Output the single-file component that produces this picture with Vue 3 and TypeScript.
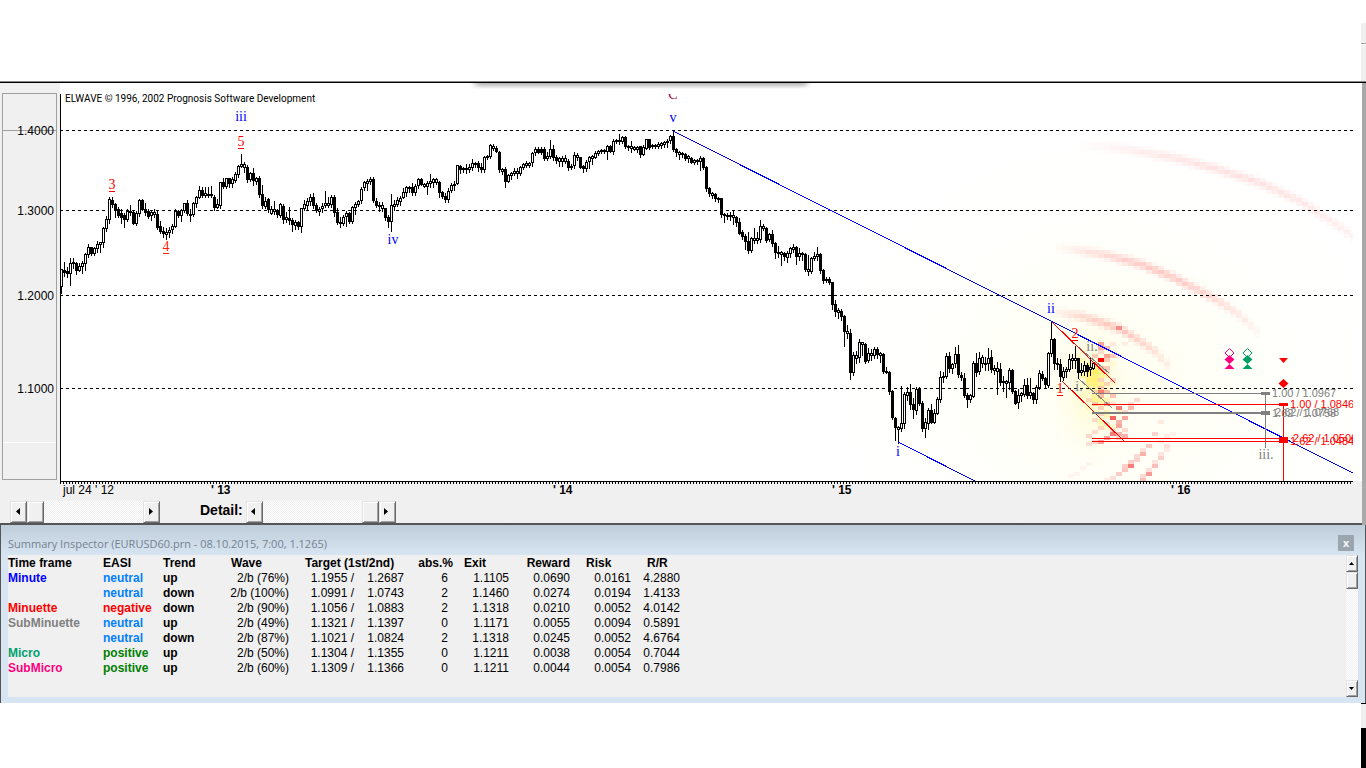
<script setup lang="ts">
type Candle = { x: number; high: number; top: number; bottom: number; low: number; filled: boolean }
type Cell = { x: number; y: number; color: string; opacity: number }
type Point = [number, number]

const AXIS_LEFT = 61
const STEP = 3

// high, body top, body bottom, low; a trailing f marks a falling bar
const bars = `
269 269 286 293,262 270 272 276f,267 271 273 277f,258 263 273 285,258 262 263 268f,262 263 270 274f,263 266 270 271,261 263 266 273,253 254 263 270,244 247 254 257,247 247 253 255f,247 248 253 255,241 244 248 252,242 242 244 252,227 228 242 247,216 219 228 231,197 199 219 223,197 200 204 207f,203 204 209 217f,207 209 215 217f,
209 213 217 223f,213 215 219 227f,209 211 219 221,205 211 212 215,211 212 223 224f,211 213 223 225,199 200 213 216,199 200 209 210f,203 209 212 215f,209 211 216 218f,210 212 215 220,209 212 214 217,210 214 227 229f,221 226 231 233f,227 231 233 237f,228 232 234 239,227 230 232 237,224 226 229 233,209 211 226 227,210 211 215 217f,
209 210 215 221,203 203 210 212,200 203 213 215f,209 214 215 221,202 203 214 216,196 197 203 207,186 190 197 198,187 190 195 197f,187 193 195 197,187 194 195 197,186 194 195 197,195 197 207 210f,199 204 207 208,182 182 205 208,178 182 186 188f,178 178 186 188,178 178 183 187f,177 179 183 187,172 174 180 182,165 166 174 177,
154 164 166 167,162 164 167 172,165 167 179 182f,172 173 179 181,168 173 180 185f,177 178 181 184,176 178 194 197f,185 194 205 208f,197 201 206 208,198 199 209 212f,206 209 213 214,201 209 211 214,209 211 214 217f,203 204 215 217,204 206 219 223f,212 217 219 222,207 218 220 224f,218 220 224 231f,220 222 225 229,221 222 226 229f,
208 208 226 232,200 204 208 210,198 201 205 210,194 197 201 205,193 197 205 208f,203 205 210 212f,207 209 211 215,203 206 208 212,191 203 205 207,197 203 205 207,195 197 204 207,195 197 212 216f,208 212 222 224f,217 222 223 227,215 217 223 225,211 213 216 226,212 213 221 223f,206 207 221 223,202 204 207 214,200 201 204 206,
187 189 200 203,181 182 187 190,179 181 183 190,177 179 181 184,177 179 200 202f,198 201 205 207f,202 205 206 211,202 205 208 211,208 208 217 220f,215 217 221 227f,194 205 221 231,200 204 206 210,197 200 204 206,196 198 201 205,188 192 197 198,186 187 192 196,186 187 188 192,183 187 192 195f,184 186 192 195,178 179 185 188,
178 179 184 185f,183 184 186 187,181 183 186 194,174 181 183 187,178 179 182 187,178 179 182 184,181 182 192 197f,191 192 196 198f,193 196 199 202f,188 191 199 202,183 185 190 192,181 184 185 190,165 165 183 184,165 166 169 173f,167 168 169 172,164 168 169 173,164 167 169 172,159 163 167 170,162 163 164 167,161 163 167 171f,
163 167 169 172f,156 157 169 172,155 156 157 159,144 145 156 158,144 146 148 150,146 148 151 152f,151 152 169 172f,168 169 171 174,167 169 181 187f,174 175 181 182,172 173 175 179,168 171 173 175,168 171 173 178,166 167 173 175,163 164 167 169,161 163 165 167,162 163 165 167,152 153 162 166,147 149 152 155,147 149 152 153f,
147 149 152 154f,147 149 158 160f,152 156 158 160,140 149 156 158,145 149 157 160f,155 157 160 163f,157 158 161 166,156 158 161 166,155 158 161 163,159 161 167 170f,164 166 167 169,152 155 165 168,153 155 157 160,157 157 167 168f,165 166 168 172f,160 162 168 171,156 157 161 168,155 156 158 164,151 153 157 158,150 151 153 155,
149 150 151 153,149 150 151 153,145 146 151 159,145 146 151 152f,139 141 151 154,139 140 141 143,134 140 141 144,136 137 141 143,136 137 146 148f,145 146 147 150,141 146 148 152,146 147 149 150,146 147 149 152,146 146 154 157f,145 147 154 155,139 139 148 149,139 139 147 149f,144 145 146 148,144 145 146 148,142 144 146 148,
142 143 145 148,141 142 144 147,139 141 142 147,135 136 140 143,132 136 149 151f,148 149 152 156f,151 152 154 159,152 153 154 157,153 154 158 160f,155 156 158 162,157 158 162 163f,159 160 162 164,159 160 161 164,156 158 161 170,157 158 167 169f,166 167 188 191f,187 188 193 196f,192 193 195 198,193 194 198 201f,197 198 199 202,
198 198 214 217f,213 214 215 222,213 215 216 219,212 215 216 220,210 215 217 224,216 217 222 226f,218 222 233 234f,230 232 236 239f,234 236 241 249f,232 241 250 253f,237 238 250 252,228 238 240 243,232 238 240 243,220 226 239 242,224 226 228 230,227 228 240 242f,233 234 239 241,230 234 243 246f,242 243 252 258f,246 252 253 257,
251 252 254 265,252 253 256 260f,251 253 257 262,247 248 253 257,244 247 249 252,246 247 256 264f,248 253 256 260,252 253 254 260,253 254 269 271f,255 269 271 275,257 258 271 273,252 256 258 260,247 254 256 260,253 254 270 273f,269 270 280 283f,277 279 280 282,277 279 282 284f,282 282 304 309f,300 304 311 316f,308 310 312 318,
309 311 316 320f,315 316 331 346f,325 331 333 338,329 333 372 379f,352 355 372 375,351 355 358 363,339 342 357 362,342 342 344 355,343 344 361 363f,348 353 360 362,349 353 355 360,347 349 355 358,347 349 354 358f,352 353 355 362,353 354 371 373f,367 371 372 373,371 372 391 394f,390 391 417 419f,417 418 427 440f,426 427 429 443,
386 423 428 431,392 394 423 428,387 392 395 400,384 392 404 409f,398 404 409 418f,387 389 410 414,387 389 403 405f,401 403 428 431f,418 422 428 437,408 410 423 429,404 410 422 423f,409 413 422 423,397 399 413 414,371 377 399 402,372 376 377 382,353 356 376 378,352 356 368 372f,363 364 368 373,347 354 363 367,345 354 374 377f,
372 375 377 380f,373 378 395 397f,393 395 399 407f,394 395 399 402,361 363 396 397,353 363 372 376f,352 358 371 374,355 357 363 367,357 363 364 370,348 358 363 370,350 357 369 372f,365 368 370 374,362 368 371 394,363 369 382 385f,376 381 382 391,380 381 383 397,368 370 382 389,369 370 391 393f,390 391 403 404f,389 395 402 408,
392 393 395 401,379 385 394 396,378 385 395 398f,378 392 395 398,392 393 399 403f,385 387 399 403,370 373 387 389,371 374 378 380f,377 378 384 388f,352 353 385 387,322 339 353 356,338 339 363 369f,358 363 364 369,359 364 376 381f,367 371 377 380,367 369 371 377,354 359 369 371,354 358 360 368,346 358 360 368,358 358 372 378f,
363 370 372 375,361 365 371 375,363 365 371 376f,357 367 369 375,362 363 368 369`

const candles: Candle[] = bars.split(',').map((bar, i) => {
  const filled = bar.trim().endsWith('f')
  const [high, top, bottom, low] = bar.replace('f', '').trim().split(/\s+/).map(Number)
  return { x: AXIS_LEFT + i * STEP, high, top, bottom, low, filled }
})
const wicks = candles.map((c) => `M${c.x} ${c.high}h1V${c.low + 1}h-1z`).join('')
const solid = candles.filter((c) => c.filled).map((c) => `M${c.x - 1} ${c.top}h3V${c.bottom + 1}h-3z`).join('')
const hollow = candles.filter((c) => !c.filled).map((c) => `M${c.x - 1} ${c.top}h3V${c.bottom + 1}h-3z`).join('')
const hollowInner = candles
  .filter((c) => !c.filled && c.bottom - c.top > 1)
  .map((c) => `M${c.x} ${c.top + 1}h1V${c.bottom}h-1z`)
  .join('')

// Probability arcs are drawn on a 6 x 4 grid of cells
function arc(points: Point[], strength: number, spread: number): Cell[] {
  const cells: Cell[] = []
  const first = points[0][0]
  const last = points[points.length - 1][0]
  for (let x = Math.ceil(first / 6) * 6; x < last; x += 6) {
    const k = points.findIndex((p) => p[0] > x)
    const [ax, ay] = points[k - 1]
    const [bx, by] = points[k]
    const centre = ay + ((by - ay) * (x + 3 - ax)) / (bx - ax)
    const fade = Math.sin((Math.PI * (x - first + 8)) / (last - first + 18))
    for (let y = Math.floor(centre / 4) * 4 - 10; y < centre + 12; y += 4) {
      const near = 1 - Math.abs(y + 2 - centre) / spread
      if (near > 0) cells.push({ x, y, color: '#ff0000', opacity: near * fade * strength })
    }
  }
  return cells
}

const spots: [string, [number, number, number][]][] = [
  ['#f00000', [
    [1098, 342, 0.35], [1098, 346, 0.3], [1104, 346, 0.25], [1098, 350, 0.12], [1104, 354, 0.35], [1110, 354, 0.2], [1092, 354, 0.18],
    [1104, 358, 0.2], [1092, 362, 0.2], [1104, 366, 0.2], [1098, 366, 0.25], [1104, 370, 0.12], [1110, 378, 0.15], [1110, 342, 0.08],
    [1122, 342, 0.06], [1116, 354, 0.06], [1098, 378, 0.15], [1104, 382, 0.15], [1098, 386, 0.2], [1098, 390, 0.5], [1104, 390, 0.25], [1092, 390, 0.15],
    [1098, 394, 0.25], [1110, 394, 0.22], [1086, 398, 0.12], [1104, 402, 0.3], [1092, 402, 0.2], [1110, 402, 0.1], [1134, 398, 0.15], [1128, 402, 0.12],
    [1098, 406, 0.15], [1116, 406, 0.5], [1128, 406, 0.25], [1122, 410, 0.15], [1098, 412, 0.15], [1110, 416, 0.6], [1122, 416, 0.35], [1092, 418, 0.12],
    [1116, 420, 0.3], [1104, 422, 0.12], [1116, 424, 0.35], [1098, 426, 0.15], [1110, 428, 0.15], [1110, 432, 0.5], [1122, 428, 0.15], [1092, 430, 0.12],
    [1116, 432, 0.3], [1086, 434, 0.15], [1104, 436, 0.35], [1116, 436, 0.15], [1098, 440, 0.35], [1092, 440, 0.15], [1122, 434, 0.3], [1086, 442, 0.12],
    [1158, 420, 0.08], [1152, 432, 0.17], [1164, 434, 0.07], [1170, 432, 0.05], [1158, 440, 0.05], [1146, 444, 0.2], [1164, 444, 0.12], [1140, 448, 0.12],
    [1140, 452, 0.3], [1134, 454, 0.15], [1134, 458, 0.18], [1128, 460, 0.18], [1128, 464, 0.5], [1122, 464, 0.18], [1122, 468, 0.22],
    [1116, 472, 0.2], [1110, 476, 0.12], [1104, 478, 0.08], [1164, 448, 0.08], [1158, 452, 0.1], [1158, 456, 0.18], [1152, 460, 0.1], [1152, 464, 0.25],
    [1146, 468, 0.12], [1146, 472, 0.4], [1140, 474, 0.15], [1140, 478, 0.25], [1086, 462, 0.04], [1080, 466, 0.04], [1074, 472, 0.04], [1068, 474, 0.04],
  ]],
  ['#ffe000', [
    [1086, 362, 0.3], [1092, 366, 0.45], [1086, 366, 0.4], [1086, 370, 0.5], [1092, 370, 0.5], [1080, 374, 0.25], [1086, 374, 0.35], [1092, 374, 0.4],
    [1098, 374, 0.3], [1092, 378, 0.4], [1098, 370, 0.35], [1086, 378, 0.4], [1092, 382, 0.35], [1086, 382, 0.3], [1086, 386, 0.2], [1092, 386, 0.25],
    [1098, 382, 0.3], [1104, 386, 0.15], [1092, 394, 0.25], [1092, 398, 0.3], [1098, 398, 0.25], [1104, 398, 0.2], [1098, 402, 0.2], [1104, 410, 0.2],
    [1092, 410, 0.15], [1098, 418, 0.2], [1104, 414, 0.2], [1098, 422, 0.2], [1104, 426, 0.15], [1074, 354, 0.15], [1080, 350, 0.15], [1080, 358, 0.2],
    [1110, 362, 0.12], [1110, 350, 0.12], [1104, 374, 0.2], [1110, 382, 0.12], [1080, 394, 0.08], [1086, 406, 0.12], [1116, 410, 0.15], [1110, 424, 0.12],
  ]],
]

const cells: Cell[] = [
  ...arc([[1076, 144], [1100, 146], [1130, 150], [1175, 158], [1220, 170], [1260, 183], [1300, 201], [1330, 220], [1354, 237], [1390, 262]], 0.12, 7),
  ...arc([[1056, 248], [1075, 250], [1105, 255], [1140, 264], [1170, 276], [1198, 290], [1217, 300], [1237, 313], [1258, 332]], 0.22, 7),
  ...arc([[1053, 312], [1080, 316], [1100, 322], [1120, 329], [1137, 339], [1153, 350], [1168, 365]], 0.22, 7),
  { x: 1116, y: 326, color: '#f00000', opacity: 0.3 },
  ...spots.flatMap(([color, list]) => list.map(([x, y, opacity]) => ({ x, y, color, opacity }))),
]

const ticks = Array.from({ length: 431 }, (_, i) => `M${60 + i * 3} 481h1v3h-1z`).join('')
const levels = [
  { y: 130, text: '1.4000' },
  { y: 210, text: '1.3000' },
  { y: 295, text: '1.2000' },
  { y: 388, text: '1.1000' },
]
const years = [
  { x: 211, text: "' 13" },
  { x: 553, text: "' 14" },
  { x: 832, text: "' 15" },
  { x: 1171, text: "' 16" },
]
const waves = [
  { x: 112, y: 189, text: '3', color: '#ff0000', line: true },
  { x: 166, y: 251, text: '4', color: '#ff2000', line: true },
  { x: 241, y: 146, text: '5', color: '#ff0000', line: true },
  { x: 241, y: 121, text: 'iii', color: '#0000ff', line: false },
  { x: 393, y: 244, text: 'iv', color: '#0000ff', line: false },
  { x: 673, y: 122, text: 'v', color: '#0000ff', line: false },
  { x: 673, y: 99, text: 'C', color: '#a00040', line: false },
  { x: 898, y: 456, text: 'i', color: '#0000ff', line: false },
  { x: 1051, y: 313, text: 'ii', color: '#0000ff', line: false },
  { x: 1075, y: 338, text: '2', color: '#ff0000', line: true },
  { x: 1060, y: 393, text: '1', color: '#ff0000', line: true },
  { x: 1092, y: 351, text: 'ii.', color: '#808080', line: false },
  { x: 1079, y: 391, text: 'i.', color: '#808080', line: false },
  { x: 1266, y: 459, text: 'iii.', color: '#808080', line: false },
]
const targets = [
  { x: 1272, y: 397, text: '1.00 / 1.0967', color: '#808080' },
  { x: 1290, y: 408, text: '1.00 / 1.0846', color: '#ff0000' },
  { x: 1275, y: 416, text: '2.62 / 1.0768', color: '#808080' },
  { x: 1272, y: 417, text: '1.62 / 1.0758', color: '#808080' },
  { x: 1293, y: 442, text: '2.62 / 1.0506', color: '#ff0000' },
  { x: 1290, y: 445, text: '1.62 / 1.0484', color: '#ff0000' },
]

type Row = { frame: string; tone: string; easi: string; trend: string; wave: string; first: string; second: string; abs: number; exit: string; reward: string; risk: string; rr: string }
const rows: Row[] = [
  { frame: 'Minute', tone: 'minute', easi: 'neutral', trend: 'up', wave: '2/b (76%)', first: '1.1955 /', second: '1.2687', abs: 6, exit: '1.1105', reward: '0.0690', risk: '0.0161', rr: '4.2880' },
  { frame: '', tone: 'minute', easi: 'neutral', trend: 'down', wave: '2/b (100%)', first: '1.0991 /', second: '1.0743', abs: 2, exit: '1.1460', reward: '0.0274', risk: '0.0194', rr: '1.4133' },
  { frame: 'Minuette', tone: 'minuette', easi: 'negative', trend: 'down', wave: '2/b (90%)', first: '1.1056 /', second: '1.0883', abs: 2, exit: '1.1318', reward: '0.0210', risk: '0.0052', rr: '4.0142' },
  { frame: 'SubMinuette', tone: 'subminuette', easi: 'neutral', trend: 'up', wave: '2/b (49%)', first: '1.1321 /', second: '1.1397', abs: 0, exit: '1.1171', reward: '0.0055', risk: '0.0094', rr: '0.5891' },
  { frame: '', tone: 'subminuette', easi: 'neutral', trend: 'down', wave: '2/b (87%)', first: '1.1021 /', second: '1.0824', abs: 2, exit: '1.1318', reward: '0.0245', risk: '0.0052', rr: '4.6764' },
  { frame: 'Micro', tone: 'micro', easi: 'positive', trend: 'up', wave: '2/b (50%)', first: '1.1304 /', second: '1.1355', abs: 0, exit: '1.1211', reward: '0.0038', risk: '0.0054', rr: '0.7044' },
  { frame: 'SubMicro', tone: 'submicro', easi: 'positive', trend: 'up', wave: '2/b (60%)', first: '1.1309 /', second: '1.1366', abs: 0, exit: '1.1211', reward: '0.0044', risk: '0.0054', rr: '0.7986' },
]
const columns = ['frame', 'easi', 'trend', 'wave', 'first', 'second', 'abs', 'exit', 'reward', 'risk', 'rr']
</script>

<template>
  <div class="app">
    <header class="top"><div class="top-blank"></div><div class="top-edge"><i></i></div></header>

    <main class="chart-window">
      <div class="chart">
        <div class="range">
          <button class="range-end" aria-label="Raise upper bound"></button>
          <div class="range-track"></div>
          <button class="range-end low" aria-label="Lower bottom bound"></button>
        </div>
        <div class="plot-back"></div>
        <svg class="plot" role="img" aria-label="EURUSD price chart with Elliott wave labels">
          <defs>
            <radialGradient id="glow"><stop offset="0" stop-color="#fff9a8" stop-opacity=".65" /><stop offset=".4" stop-color="#fffbd0" stop-opacity=".5" /><stop offset="1" stop-color="#fffef0" stop-opacity="0" /></radialGradient>
            <radialGradient id="haze"><stop offset="0" stop-color="#fffef0" /><stop offset=".5" stop-color="#fffffa" /><stop offset="1" stop-color="#fffffd" stop-opacity="0" /></radialGradient>
            <linearGradient id="drop" x1="0" y1="0" x2="0" y2="1"><stop offset="0" stop-color="#000" stop-opacity=".3" /><stop offset="1" stop-color="#000" stop-opacity="0" /></linearGradient>
            <clipPath id="area"><rect x="60" y="94" width="1293" height="387" /></clipPath>
            <filter id="soft" x="-5%" width="110%" y="0" height="1"><feGaussianBlur stdDeviation="3 0" /></filter>
          </defs>
          <g transform="translate(0 -83)">
            <rect x="475" y="83" width="332" height="6" fill="url(#drop)" filter="url(#soft)" />
            <g clip-path="url(#area)">
              <ellipse cx="1110" cy="380" rx="290" ry="250" fill="url(#haze)" />
              <ellipse cx="1092" cy="388" rx="46" ry="85" fill="url(#glow)" />
              <g shape-rendering="crispEdges">
                <rect v-for="(c, i) in cells" :key="i" :x="c.x" :y="c.y" width="6" height="4" :fill="c.color" :fill-opacity="c.opacity" />
                <rect x="1098" y="358" width="6" height="4" fill="#ff0000" />
              </g>
            </g>
            <g shape-rendering="crispEdges">
              <line v-for="l in levels" :key="l.y" x1="60" :y1="l.y + 0.5" x2="1353" :y2="l.y + 0.5" stroke="#000" stroke-dasharray="3 3" />
              <path :d="wicks" />
              <path :d="solid" />
              <path :d="hollow" />
              <path :d="hollowInner" fill="#fff" />
              <path d="M60 94h1v390h-1zM60 481h1293v1h-1293z" />
              <path :d="ticks" />
            </g>
            <g clip-path="url(#area)">
              <g fill="none" shape-rendering="crispEdges">
                <path d="M673 131L1353 473M898 442L977 482" stroke="#0000ff" />
                <path d="M1077 346L1109 373M1079 379L1112 408" stroke="#808080" />
                <path d="M1052 322L1115 383M1062 381L1124 441" stroke="#ff0000" />
                <path d="M1265.500 393V448M1092 393.500H1265M1092 412.500H1265" stroke="#808080" />
                <path d="M1092 413.500H1265" stroke="#808080" />
                <path d="M1283.500 404V481M1092 404.500H1283M1092 438.500H1283M1092 441.500H1283" stroke="#ff0000" />
              </g>
              <path d="M1261 392h9v3h-9zM1261 411h9v4h-9z" fill="#808080" />
              <path d="M1279 403h9v3h-9zM1279 437h9v6h-9z" fill="#ff0000" />
              <g v-for="m in [{ x: 0, c: '#ff0080' }, { x: 18, c: '#00a068' }]" :key="m.c" :transform="`translate(${m.x} 0)`">
                <path d="M1229.500 348.500l4.500 4.500-4.500 4.500-4.500-4.500z" fill="none" :stroke="m.c" />
                <path d="M1229.500 355l5 4.500-5 4.500-5-4.500zM1229.500 364l5 5h-10z" :fill="m.c" />
              </g>
              <path d="M1279 358h9l-4.500 5zM1283.500 379l5 4.500-5 4.500-5-4.500z" fill="#ff0000" />
              <g class="wave-labels">
                <template v-for="(w, i) in waves" :key="i">
                  <text :x="w.x" :y="w.y" :fill="w.color">{{ w.text }}</text>
                  <rect v-if="w.line" :x="w.x - 3" :y="w.y + 2" width="6" height="1" :fill="w.color" />
                </template>
              </g>
              <g class="target-labels">
                <text v-for="t in targets" :key="t.text" :x="t.x" :y="t.y" :fill="t.color">{{ t.text }}</text>
              </g>
              <text class="credit" x="65" y="102">ELWAVE © 1996, 2002 Prognosis Software Development</text>
            </g>
            <g class="scale">
              <text v-for="l in levels" :key="l.text" x="54" :y="l.y + 5" text-anchor="end">{{ l.text }}</text>
              <text x="63" y="494">jul 24 ' 12</text>
              <text v-for="y in years" :key="y.text" class="year" :x="y.x" y="494">{{ y.text }}</text>
            </g>
          </g>
        </svg>
      </div>

      <div class="scrollers">
        <div class="scroller" role="group" aria-label="Time position">
          <button class="key" aria-label="Scroll left"><svg viewBox="0 0 4 7"><path d="M4 0v7L0 3.500z" /></svg></button>
          <button class="key" aria-label="Position thumb"></button>
          <span class="track"></span>
          <button class="key" aria-label="Scroll right"><svg viewBox="0 0 4 7"><path d="M0 0v7l4-3.500z" /></svg></button>
        </div>
        <span id="detail" class="detail">Detail:</span>
        <div class="scroller zoomer" role="group" aria-labelledby="detail">
          <button class="key" aria-label="Less detail"><svg viewBox="0 0 4 7"><path d="M4 0v7L0 3.500z" /></svg></button>
          <span class="track"></span>
          <button class="key" aria-label="Detail thumb"></button>
          <button class="key" aria-label="More detail"><svg viewBox="0 0 4 7"><path d="M0 0v7l4-3.500z" /></svg></button>
        </div>
      </div>
    </main>

    <section class="inspector">
      <div class="titlebar">
        <h1>Summary Inspector (EURUSD60.prn - 08.10.2015, 7:00, 1.1265)</h1>
        <button class="close" aria-label="Close">x</button>
      </div>
      <div class="pane">
        <div class="content">
          <table>
            <colgroup><col v-for="c in columns" :key="c" :class="c" /></colgroup>
            <thead>
              <tr>
                <th>Time frame</th><th>EASI</th><th>Trend</th><th class="inset">Wave</th><th class="inset" colspan="2">Target (1st/2nd)</th>
                <th class="num">abs.%</th><th class="near">Exit</th><th class="num">Reward</th><th class="inset">Risk</th><th class="inset">R/R</th>
              </tr>
            </thead>
            <tbody>
              <tr v-for="(r, i) in rows" :key="i">
                <td :class="['name', r.tone]">{{ r.frame }}</td>
                <td :class="['name', r.easi]">{{ r.easi }}</td>
                <td class="name">{{ r.trend }}</td>
                <td class="num">{{ r.wave }}</td>
                <td class="num">{{ r.first }}</td>
                <td class="num">{{ r.second }}</td>
                <td class="num pct">{{ r.abs }}</td>
                <td class="num">{{ r.exit }}</td>
                <td class="num">{{ r.reward }}</td>
                <td class="num">{{ r.risk }}</td>
                <td class="num">{{ r.rr }}</td>
              </tr>
            </tbody>
          </table>
        </div>
        <div class="vscroll" role="group" aria-label="Scroll summary">
          <button class="key" aria-label="Scroll up"><svg class="v" viewBox="0 0 5 3"><path d="M0 3h5L2.500 0z" /></svg></button>
          <button class="key" aria-label="Scroll thumb"></button>
          <span class="track"></span>
          <button class="key" aria-label="Scroll down"><svg class="v" viewBox="0 0 5 3"><path d="M0 0h5L2.500 3z" /></svg></button>
        </div>
      </div>
    </section>

    <footer class="bottom"><div class="bottom-edge"></div></footer>
  </div>
</template>

<style>
body {
  background: #fff;
}
</style>

<style scoped>
.app {
  display: flex;
  flex-direction: column;
  min-height: 100vh;
  overflow: hidden;
  background: #fff;
  color: #000;
  font: 12px/15px "Liberation Sans", Arial, sans-serif;
}
button {
  padding: 0;
  border: 0;
  border-radius: 0;
  color: inherit;
  font: inherit;
}
.top {
  display: flex;
  height: 81px;
  background: linear-gradient(#888, #888) 0 100% / 100% 1px no-repeat;
  border-bottom: 1px solid #000;
}
.top-blank {
  flex: 1;
}
.top-edge {
  width: 5px;
  margin: 23px 0 1px;
  background: #f0f0f0;
}
.top-edge i {
  display: block;
  height: 1px;
  margin-top: 20px;
  border-bottom: 1px solid #fff;
  background: #a0a0a0;
}
.chart-window {
  border-right: 4px solid #a9a9a9;
  background: #f0f0f0;
}
.top {
  height: 82px;
}
.chart {
  display: grid;
  grid-template: 398px 18px / 60px minmax(0, 1fr);
}
.range {
  grid-area: 1 / 1;
  display: flex;
  flex-direction: column;
  margin: 10px 3px 1px 2px;
  border: 1px solid #a0a0a0;
}
.range-end {
  height: 37px;
  background: #f0f0f0;
  border-bottom: 1px solid #a0a0a0;
}
.range-end.low {
  border-top: 1px solid #fff;
  border-bottom: 0;
}
.range-track {
  flex: 1;
}
.plot-back {
  grid-area: 1 / 2;
  background: #fff;
}
.plot {
  grid-area: 1 / 1 / 3 / 3;
  display: block;
  width: 100%;
  height: 100%;
  pointer-events: none;
}
.wave-labels {
  font: 14px "Liberation Serif", serif;
  text-anchor: middle;
}
.target-labels {
  font: 11px "Liberation Sans", sans-serif;
}
.credit {
  font: 10px Roboto, sans-serif;
}
.scale {
  font-size: 12px;
}
.year,
.detail {
  font-weight: bold;
}
.scrollers {
  display: flex;
  height: 26px;
  padding: 2px 0 0 10px;
  border-bottom: 2px solid #555;
  box-sizing: border-box;
}
.scroller {
  display: flex;
  width: 150px;
  height: 22px;
}
.detail {
  margin-left: 40px;
  font-size: 14px;
  line-height: 18px;
}
.zoomer {
  margin-left: 3px;
}
.key {
  display: flex;
  flex: none;
  align-items: center;
  justify-content: center;
  width: 17px;
  padding: 0 2px 1px 0;
  box-sizing: border-box;
  border: 1px solid;
  border-color: #e3e3e3 #696969 #696969 #e3e3e3;
  background: #f0f0f0;
  box-shadow: inset 1px 1px #fff, inset -1px -1px #a0a0a0;
}
.key svg {
  width: 4px;
  height: 7px;
}
.key svg.v {
  width: 5px;
  height: 3px;
}
.track {
  flex: 1;
  background: repeating-conic-gradient(#fff 0 25%, #f0f0f0 0 50%) 0 0 / 2px 2px;
}
.inspector {
  padding: 0 7px 6px;
  border: solid #555;
  border-width: 0 1px 0;
  background: linear-gradient(#bfcddb, #d7e4f2 30px);
}
.titlebar {
  display: flex;
  align-items: center;
  height: 30px;
}
h1 {
  flex: 1;
  margin: 8px 0 0;
  color: #75828f;
  font: 11px/16px "Open Sans", sans-serif;
}
.close {
  width: 16px;
  height: 16px;
  margin: 6px 4px 0 0;
  background: #9aa5b0;
  color: #fff;
  font: bold 11px/14px "Liberation Sans", sans-serif;
}
.pane {
  display: flex;
  height: 142px;
  background: #f0f0f0;
}
.content {
  flex: 1;
  min-width: 0;
}
.vscroll {
  display: flex;
  flex-direction: column;
  width: 12px;
}
.vscroll .key {
  width: 12px;
  height: 17px;
}
table {
  width: 674px;
  table-layout: fixed;
  border-collapse: collapse;
}
col.frame { width: 95px; }
col.easi { width: 60px; }
col.trend { width: 54px; }
col.wave { width: 74px; }
col.first { width: 65px; }
col.second { width: 50px; }
col.abs { width: 49px; }
col.exit { width: 56px; }
col.reward { width: 61px; }
col.risk { width: 61px; }
col.rr { width: 49px; }
th,
td {
  height: 15px;
  padding: 0;
  text-align: left;
  white-space: nowrap;
}
th {
  height: 16px;
}
th.inset {
  padding-left: 14px;
}
th.near {
  padding-left: 9px;
}
.num {
  padding-right: 2px;
  text-align: right;
}
.num.pct {
  padding-right: 7px;
}
.name {
  font-weight: bold;
}
.minute { color: #0000ff; }
.minuette,
.negative { color: #ff0000; }
.subminuette { color: #808080; }
.micro { color: #00a070; }
.submicro { color: #ff0080; }
.neutral { color: #0080ff; }
.positive { color: #008000; }
.bottom {
  display: flex;
  flex: 1;
  justify-content: flex-end;
}
.bottom-edge {
  width: 5px;
  border-top: 1px solid #000;
  background: linear-gradient(#f0f0f0 24px, #000 24px);
}
</style>
